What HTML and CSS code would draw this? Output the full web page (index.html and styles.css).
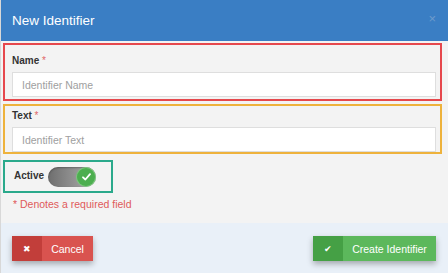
FILE: index.html
```html
<!DOCTYPE html>
<html lang="en">
<head>
    <meta charset="UTF-8">
    <meta name="viewport" content="width=device-width, initial-scale=1.0">
    <title>New Identifier</title>
    <link rel="stylesheet" href="styles.css">
</head>
<body>
    <div class="modal">
        <div class="modal-header">
            <h1>New Identifier</h1>
            <span class="close">&times;</span>
        </div>

        <div class="modal-body">
            <div class="form-group name-group">
                <label>Name <span class="req">*</span></label>
                <input type="text" placeholder="Identifier Name">
            </div>
            <div class="form-group text-group">
                <label>Text <span class="req">*</span></label>
                <input type="text" placeholder="Identifier Text">
            </div>
            <div class="active-group">
                <label>Active</label>
                <span class="toggle">
                    <span class="knob">
                        <svg width="9" height="8" viewBox="0 0 9 8"><path d="M1 4.3 L3.4 6.5 L8 1.2" fill="none" stroke="#fff" stroke-width="1.8" stroke-linecap="round" stroke-linejoin="round"/></svg>
                    </span>
                </span>
            </div>
            <p class="note">* Denotes a required field</p>
        </div>

        <div class="modal-footer">
            <button class="btn btn-cancel"><span class="btn-icon">&#10006;</span><span class="btn-text">Cancel</span></button>
            <button class="btn btn-create"><span class="btn-icon">&#10004;</span><span class="btn-text">Create Identifier</span></button>
        </div>
    </div>
</body>
</html>
```

FILE: styles.css
```css
body {
    margin: 0;
    font-family: "Liberation Sans", Arial, sans-serif;
    background-color: #f2f2f2;
}
.modal {
    width: 448px;
    height: 273px;
    display: flex;
    flex-direction: column;
    border-left: 1px solid #d8d8d8;
    box-sizing: border-box;
}
.modal-header {
    height: 41px;
    background-color: #3a7ec4;
    display: flex;
    align-items: center;
    justify-content: space-between;
    padding: 0 12px 0 11px;
}
.modal-header h1 {
    margin: 0;
    font-size: 13.5px;
    font-weight: normal;
    color: #ffffff;
}
.close {
    color: #6d9bcc;
    font-size: 13px;
    margin-top: -4px;
}
.modal-body {
    flex: 1;
    padding: 2px 6px 0 2px;
    background-color: #f3f3f3;
}
.form-group {
    display: flex;
    flex-direction: column;
    border: 2px solid #e6484d;
    padding: 10px 4px 2px 7px;
}
.form-group label,
.active-group label {
    font-size: 10px;
    font-weight: bold;
    color: #333333;
    line-height: 12px;
    margin-bottom: 5px;
}
.req {
    color: #e06666;
    font-weight: normal;
}
.form-group input {
    height: 25px;
    box-sizing: border-box;
    border: 1px solid #dedede;
    background-color: #ffffff;
    padding: 0 9px;
    font-family: "Liberation Sans", Arial, sans-serif;
    font-size: 10.5px;
    color: #555555;
    outline: none;
}
.form-group input::placeholder {
    color: #a0a0a0;
}
.text-group {
    margin-top: 3px;
    border-color: #eeb23c;
    padding-top: 4px;
    padding-bottom: 0;
}
.active-group {
    margin-top: 6px;
    width: 110px;
    height: 33px;
    box-sizing: border-box;
    border: 2px solid #2aa98b;
    display: flex;
    align-items: center;
    padding-left: 9px;
    gap: 4px;
}
.active-group label {
    margin: 0 0 2px 0;
}
.toggle {
    width: 48px;
    height: 20px;
    border-radius: 10px;
    background: linear-gradient(to right, #6e6e6e, #b0b0b0);
    display: flex;
    justify-content: flex-end;
    box-shadow: inset 0 1px 2px rgba(0,0,0,0.3);
}
.knob {
    width: 18px;
    height: 18px;
    margin: 1px;
    border-radius: 50%;
    background-color: #4cae4f;
    box-shadow: 0 0 0 1px #7cc77e;
    display: flex;
    align-items: center;
    justify-content: center;
}
.note {
    margin: 5px 0 0 10px;
    font-size: 10.5px;
    line-height: 13px;
    color: #e05a5a;
}
.modal-footer {
    height: 50px;
    box-sizing: border-box;
    background-color: #e9f0f8;
    display: flex;
    justify-content: space-between;
    align-items: flex-start;
    padding: 13px 12px 0 11px;
}
.btn {
    height: 25px;
    border: none;
    padding: 0;
    display: flex;
    align-items: stretch;
    font-family: "Liberation Sans", Arial, sans-serif;
    font-size: 10.5px;
    color: #ffffff;
    box-shadow: 0 3px 6px rgba(0,0,0,0.3);
    cursor: pointer;
}
.btn-icon {
    width: 30px;
    display: flex;
    align-items: center;
    justify-content: center;
    font-size: 9px;
}
.btn-text {
    flex: 1;
    display: flex;
    align-items: center;
    justify-content: center;
    white-space: nowrap;
}
.btn-cancel {
    width: 81px;
    background-color: #d9534f;
}
.btn-cancel .btn-icon {
    background-color: #c23e3a;
}
.btn-create {
    width: 123px;
    background-color: #5cb85c;
}
.btn-create .btn-icon {
    background-color: #45a045;
}
```
